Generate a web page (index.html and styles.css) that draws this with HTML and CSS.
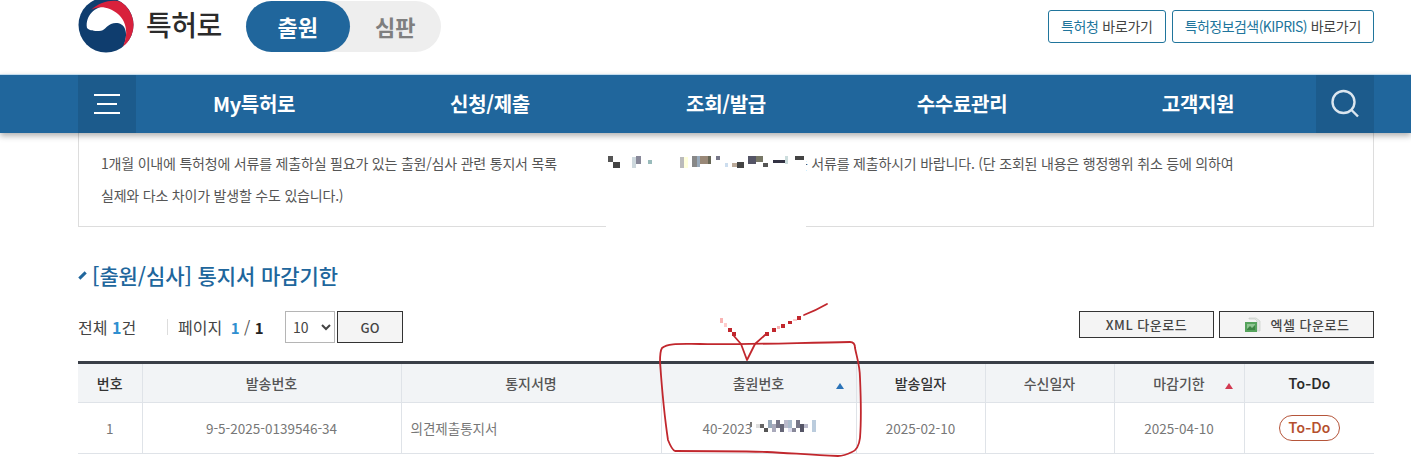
FILE: index.html
```html
<!DOCTYPE html>
<html lang="ko">
<head>
    <meta charset="UTF-8">
    <meta name="viewport" content="width=device-width, initial-scale=1.0">
    <title>출원/심사 통지서 마감기한</title>
    <link rel="stylesheet" href="styles.css">
</head>
<body>
    <!-- 상단 -->
    <header class="top">
        <div class="wrap top-inner">
            <svg class="logo" width="58" height="58" viewBox="-29 -29 58 58">
                <circle r="27.5" fill="#0f3d6e"/>
                <path fill="#fff" d="M-19 3C-21 -9 -11 -19 1 -19C14 -19 24 -8 24 4C24 12 22 18 17 23C20 15 21 9 19 4C17 -2 10 -3 5 -1C0 1 -1 6 -7 6C-12 6 -16 6 -19 3Z"/>
                <path fill="#d8213c" d="M-15 -15C-6 -24 8 -26 15 -23A27.5 27.5 0 0 1 17 21.6C23 8 20 -4 12 -11C4 -18 -7 -20 -15 -15Z"/>
            </svg>
            <span class="brand">특허로</span>
            <div class="toggle">
                <span class="toggle-item active">출원</span>
                <span class="toggle-item">심판</span>
            </div>
            <div class="top-links">
                <a class="top-link"><em>특허청</em> 바로가기</a>
                <a class="top-link"><em class="narrow">특허정보검색(KIPRIS)</em> 바로가기</a>
            </div>
        </div>
    </header>

    <!-- 메뉴 -->
    <nav class="nav">
        <div class="wrap nav-inner">
            <div class="nav-btn">
                <svg width="28" height="22" viewBox="0 0 28 22" fill="none" stroke="#fff" stroke-width="2">
                    <path d="M1 2H27M4 11H24M1 20H27"/>
                </svg>
            </div>
            <a class="nav-item">My특허로</a>
            <a class="nav-item">신청/제출</a>
            <a class="nav-item">조회/발급</a>
            <a class="nav-item">수수료관리</a>
            <a class="nav-item">고객지원</a>
            <div class="nav-btn">
                <svg width="30" height="30" viewBox="0 0 30 30" fill="none" stroke="#dbe6ef" stroke-width="2.4">
                    <circle cx="13.5" cy="13" r="11"/>
                    <path d="M21.5 21L28 27.5"/>
                </svg>
            </div>
        </div>
    </nav>

    <main class="wrap">
        <div class="notice">
            <p>1개월 이내에 특허청에 서류를 제출하실 필요가 있는 출원/심사 관련 통지서 목록<span class="notice-gap"></span>대응하는 서류를 제출하시기 바랍니다. (단 조회된 내용은 행정행위 취소 등에 의하여<br>실제와 다소 차이가 발생할 수도 있습니다.)</p>
        </div>

        <h2 class="title"><i class="title-mark"></i>[출원/심사] 통지서 마감기한</h2>

        <div class="toolbar">
            <span class="total">전체 <b>1</b>건</span>
            <span class="paging">페이지 <b class="cur">1</b> <span class="slash">/</span> <b>1</b></span>
            <select class="size">
                <option>10</option>
            </select>
            <button class="btn-go">GO</button>
            <div class="downloads">
                <button class="btn-down btn-xml">XML 다운로드</button>
                <button class="btn-down btn-excel">
                    <svg width="18" height="16" viewBox="0 0 18 16">
                        <path d="M5 1H12L16 4V14H13V4L11 2H5Z" fill="#e4e8e4" stroke="#c4cbc4" stroke-width="0.6"/>
                        <rect x="1" y="5" width="12" height="10" fill="#55a35c"/>
                        <path d="M3 7H11V13H3Z" fill="#8fc592"/>
                        <path d="M3 12L6 9L8 11L11 8V13H3Z" fill="#3c8443"/>
                    </svg>
                    엑셀 다운로드
                </button>
            </div>
        </div>

        <table class="list">
            <colgroup>
                <col class="c1"><col class="c2"><col class="c3"><col class="c4">
                <col class="c5"><col class="c6"><col class="c7"><col class="c8">
            </colgroup>
            <thead>
                <tr>
                    <th class="strong">번호</th>
                    <th>발송번호</th>
                    <th>통지서명</th>
                    <th class="sort">출원번호<i class="arrow up-blue"></i></th>
                    <th class="strong">발송일자</th>
                    <th>수신일자</th>
                    <th class="sort">마감기한<i class="arrow up-red"></i></th>
                    <th class="todo-head">To-Do</th>
                </tr>
            </thead>
            <tbody>
                <tr>
                    <td>1</td>
                    <td>9-5-2025-0139546-34</td>
                    <td class="left">의견제출통지서</td>
                    <td class="appno">40-2023</td>
                    <td>2025-02-10</td>
                    <td></td>
                    <td>2025-04-10</td>
                    <td><span class="todo">To-Do</span></td>
                </tr>
            </tbody>
        </table>
    </main>

    <!-- 가림 처리 -->
    <div class="patch"></div>

    <!-- 빨간 펜 표시 -->
    <svg class="markup" width="1411" height="472" viewBox="0 0 1411 472" shape-rendering="crispEdges">
        <g>
            <rect x="608" y="156" width="5" height="6" fill="#555"/>
            <rect x="613" y="162" width="7" height="6" fill="#444"/>
            <rect x="632" y="157" width="4" height="11" fill="#cdd8dd"/>
            <rect x="636" y="156" width="5" height="8" fill="#889"/>
            <rect x="648" y="160" width="4" height="4" fill="#9bb"/>
            <rect x="680" y="157" width="4" height="11" fill="#bbb"/>
            <rect x="684" y="157" width="4" height="11" fill="#ffd"/>
            <rect x="692" y="156" width="5" height="11" fill="#888"/>
            <rect x="697" y="156" width="3" height="11" fill="#9ab"/>
            <rect x="700" y="156" width="8" height="8" fill="#987"/>
            <rect x="708" y="156" width="3" height="8" fill="#665"/>
            <rect x="716" y="156" width="4" height="4" fill="#778"/>
            <rect x="725" y="163" width="3" height="4" fill="#cde"/>
            <rect x="732" y="163" width="5" height="4" fill="#ba9"/>
            <rect x="737" y="162" width="7" height="6" fill="#444"/>
            <rect x="748" y="156" width="8" height="8" fill="#556"/>
            <rect x="756" y="156" width="7" height="6" fill="#776"/>
            <rect x="763" y="163" width="5" height="4" fill="#555"/>
            <rect x="773" y="160" width="12" height="3" fill="#334"/>
            <rect x="785" y="156" width="3" height="8" fill="#cdd"/>
            <rect x="795" y="156" width="9" height="4" fill="#444"/>
        </g>
        <g>
            <rect x="750" y="422" width="2" height="5" fill="#777"/>
            <rect x="756" y="424" width="4" height="4" fill="#ddd"/>
            <rect x="760" y="424" width="4" height="4" fill="#666"/>
            <rect x="764" y="428" width="4" height="4" fill="#555"/>
            <rect x="768" y="420" width="4" height="8" fill="#9ab"/>
            <rect x="772" y="424" width="4" height="8" fill="#aab"/>
            <rect x="776" y="420" width="4" height="8" fill="#778"/>
            <rect x="780" y="424" width="4" height="8" fill="#667"/>
            <rect x="784" y="420" width="4" height="8" fill="#bbc"/>
            <rect x="788" y="420" width="4" height="8" fill="#abc"/>
            <rect x="788" y="428" width="4" height="4" fill="#dde"/>
            <rect x="792" y="428" width="4" height="4" fill="#889"/>
            <rect x="796" y="420" width="4" height="8" fill="#778"/>
            <rect x="800" y="424" width="4" height="8" fill="#556"/>
            <rect x="804" y="424" width="4" height="4" fill="#bbc"/>
            <rect x="812" y="420" width="4" height="12" fill="#bcd"/>
        </g>
        <g>
            <rect x="720" y="318" width="3" height="5" fill="#f9b4b4"/>
            <rect x="724" y="323" width="3" height="4" fill="#fcc"/>
            <rect x="728" y="328" width="4" height="4" fill="#c1272d"/>
            <rect x="732" y="332" width="4" height="4" fill="#c1272d"/>
            <rect x="765" y="332" width="4" height="4" fill="#c1272d"/>
            <rect x="772" y="328" width="4" height="4" fill="#c1272d"/>
            <rect x="777" y="326" width="3" height="3" fill="#f9b4b4"/>
            <rect x="781" y="324" width="4" height="4" fill="#c1272d"/>
            <rect x="788" y="321" width="4" height="3" fill="#c1272d"/>
            <rect x="793" y="319" width="4" height="2" fill="#fcc"/>
            <rect x="797" y="316" width="4" height="4" fill="#c1272d"/>
        </g>
        <g fill="none" stroke="#c1272d" stroke-width="1.8" stroke-linecap="round" stroke-linejoin="round" shape-rendering="auto">
            <path d="M804 315C812 312 820 308 827 304"/>
            <path d="M734 336L741 344L747 360L755 344L765 335"/>
            <path d="M662 348C668 343 680 344 700 344C730 345 790 343 850 342C853 342 855 344 855 348C857 358 860 366 860 378C861 400 861 425 860 438C859 446 857 450 852 452C848 454 843 456 838 456C810 455 790 453 767 452C735 451 705 451 675 451C672 450 670 445 668 440C665 420 662 390 660 362C660 356 660 351 662 348Z"/>
        </g>
    </svg>
</body>
</html>
```

FILE: styles.css
```css
* {
    box-sizing: border-box;
}
html, body {
    margin: 0;
    padding: 0;
    height: 472px;
    overflow: hidden;
}
body {
    position: relative;
    font-family: "Noto Sans CJK KR", "Noto Sans", sans-serif;
    color: #555;
    background: #fff;
}
.wrap {
    width: 1296px;
    margin-left: 78px;
}

/* 상단 */
.top {
    height: 74px;
}
.top-inner {
    display: flex;
    align-items: flex-start;
    height: 74px;
}
.logo {
    flex: none;
    margin-top: -4px;
    margin-left: -1px;
}
.brand {
    margin-left: 11px;
    margin-top: 2px;
    font-size: 28px;
    line-height: 44px;
    font-weight: 500;
    letter-spacing: -0.5px;
    color: #2b2b2b;
}
.toggle {
    display: flex;
    width: 195px;
    height: 51px;
    margin-top: 1px;
    margin-left: 24px;
    border-radius: 26px;
    background: #eee;
}
.toggle-item {
    flex: 1;
    text-align: center;
    font-size: 22px;
    line-height: 51px;
    font-weight: 700;
    color: #7f7f7f;
}
.toggle-item.active {
    flex: none;
    width: 104px;
    border-radius: 26px;
    background: #20669c;
    color: #fff;
}
.top-links {
    display: flex;
    gap: 6px;
    margin-left: auto;
    margin-top: 10px;
}
.top-link {
    display: block;
    height: 33px;
    padding: 0 12px;
    border: 1px solid #20759c;
    border-radius: 3px;
    font-size: 14px;
    line-height: 30px;
    letter-spacing: -0.3px;
    color: #444;
    white-space: nowrap;
}
.top-link em {
    font-style: normal;
    color: #20759c;
}
.top-link em.narrow {
    letter-spacing: -0.55px;
}

/* 메뉴 */
.nav {
    position: relative;
    z-index: 1;
    height: 59px;
    border-top: 1px solid #c3dcee;
    background: #20669c;
    box-shadow: 0 3px 6px rgba(0, 0, 0, 0.3);
}
.nav-inner {
    display: flex;
    height: 58px;
}
.nav-btn {
    display: flex;
    flex: none;
    align-items: center;
    justify-content: center;
    width: 58px;
    background: #1c5b8c;
}
.nav-item {
    flex: 1;
    text-align: center;
    font-size: 20px;
    line-height: 58px;
    font-weight: 700;
    letter-spacing: -0.3px;
    color: #fff;
}

/* 안내 */
.notice {
    height: 94px;
    padding: 14px 22px 0;
    border: 1px solid #ddd;
    border-top: 0;
}
.notice p {
    margin: 0;
    font-size: 14px;
    line-height: 32px;
    letter-spacing: -0.2px;
    white-space: nowrap;
    color: #555;
}
.notice-gap {
    display: inline-block;
    width: 200px;
}
.patch {
    position: absolute;
    left: 606px;
    top: 136px;
    width: 200px;
    height: 97px;
    background: #fff;
}
.markup {
    position: absolute;
    left: 0;
    top: 0;
    z-index: 2;
}

/* 제목 */
.title {
    display: flex;
    align-items: center;
    height: 30px;
    margin: 33px 0 0;
    font-size: 21px;
    line-height: 30px;
    font-weight: 500;
    letter-spacing: -0.1px;
    color: #20669c;
}
.title-mark {
    width: 9px;
    height: 3px;
    margin-right: 5px;
    background: #20669c;
    transform: rotate(-45deg);
}

/* 검색 줄 */
.toolbar {
    display: flex;
    align-items: flex-start;
    height: 32px;
    margin-top: 21px;
    font-size: 16px;
    line-height: 32px;
    color: #444;
}
.total {
    width: 89px;
}
.total b {
    color: #2f8fd0;
}
.paging {
    width: 118px;
    padding-left: 11px;
    background: linear-gradient(#ddd, #ddd) no-repeat 0 8px / 1px 16px;
}
.paging b {
    color: #222;
    font-size: 15px;
}
.paging .cur {
    margin-left: 4px;
    color: #2f8fd0;
}
.slash {
    color: #555;
}
.size {
    width: 50px;
    height: 32px;
    padding-left: 3px;
    border: 1px solid #b5b5b5;
    border-radius: 0;
    background-color: #fff;
    font-family: inherit;
    font-size: 14px;
    color: #444;
}
.btn-go {
    width: 66px;
    height: 32px;
    margin-left: 2px;
    border: 1px solid #333;
    background: #f4f4f4;
    font-family: inherit;
    font-size: 13px;
    font-weight: 500;
    color: #444;
}
.downloads {
    display: flex;
    gap: 5px;
    margin-left: auto;
}
.btn-down {
    display: flex;
    align-items: center;
    justify-content: center;
    height: 27px;
    padding: 0;
    border: 1px solid #333;
    background: #f4f4f4;
    font-family: inherit;
    font-size: 13px;
    font-weight: 500;
    letter-spacing: 0.5px;
    color: #444;
}
.btn-xml {
    width: 135px;
}
.btn-excel {
    gap: 9px;
    width: 155px;
}

/* 목록 */
.list {
    width: 1296px;
    margin-top: 18px;
    table-layout: fixed;
    border-collapse: collapse;
    border-top: 3px solid #3a3f47;
}
.c1 { width: 64px; }
.c2 { width: 259px; }
.c3 { width: 260px; }
.c4 { width: 195px; }
.c5 { width: 129px; }
.c6 { width: 129px; }
.c7 { width: 130px; }
.c8 { width: 130px; }
.list th, .list td {
    border-left: 1px solid #dfe3e8;
    border-bottom: 1px solid #dfe3e8;
    text-align: center;
    font-size: 14px;
}
.list th:first-child, .list td:first-child {
    border-left: 0;
}
.list th {
    height: 40px;
    background: #f2f4f6;
    font-weight: 500;
    color: #555;
}
.list th.strong {
    color: #333;
}
.list td {
    height: 51px;
    font-size: 13.5px;
    color: #777;
}
.list td.left {
    padding-left: 9px;
    text-align: left;
}
.list td.appno {
    padding-right: 66px;
    padding-left: 41px;
    text-align: left;
}
.sort {
    position: relative;
}
.arrow {
    position: absolute;
    top: 19px;
    width: 0;
    height: 0;
    border-left: 4px solid transparent;
    border-right: 4px solid transparent;
}
.up-blue {
    right: 12px;
    border-bottom: 6px solid #2b73b8;
}
.up-red {
    right: 11px;
    border-bottom: 6px solid #d23a52;
}
.list th.todo-head {
    font-family: Inter, "Noto Sans", sans-serif;
    font-size: 14px;
    font-weight: 600;
    color: #2b2b2b;
}
.todo {
    display: inline-block;
    width: 61px;
    height: 26px;
    border: 1px solid #b5553a;
    border-radius: 13px;
    font-family: Inter, "Noto Sans", sans-serif;
    font-size: 14px;
    font-weight: 600;
    line-height: 24px;
    color: #b5502f;
}
```
